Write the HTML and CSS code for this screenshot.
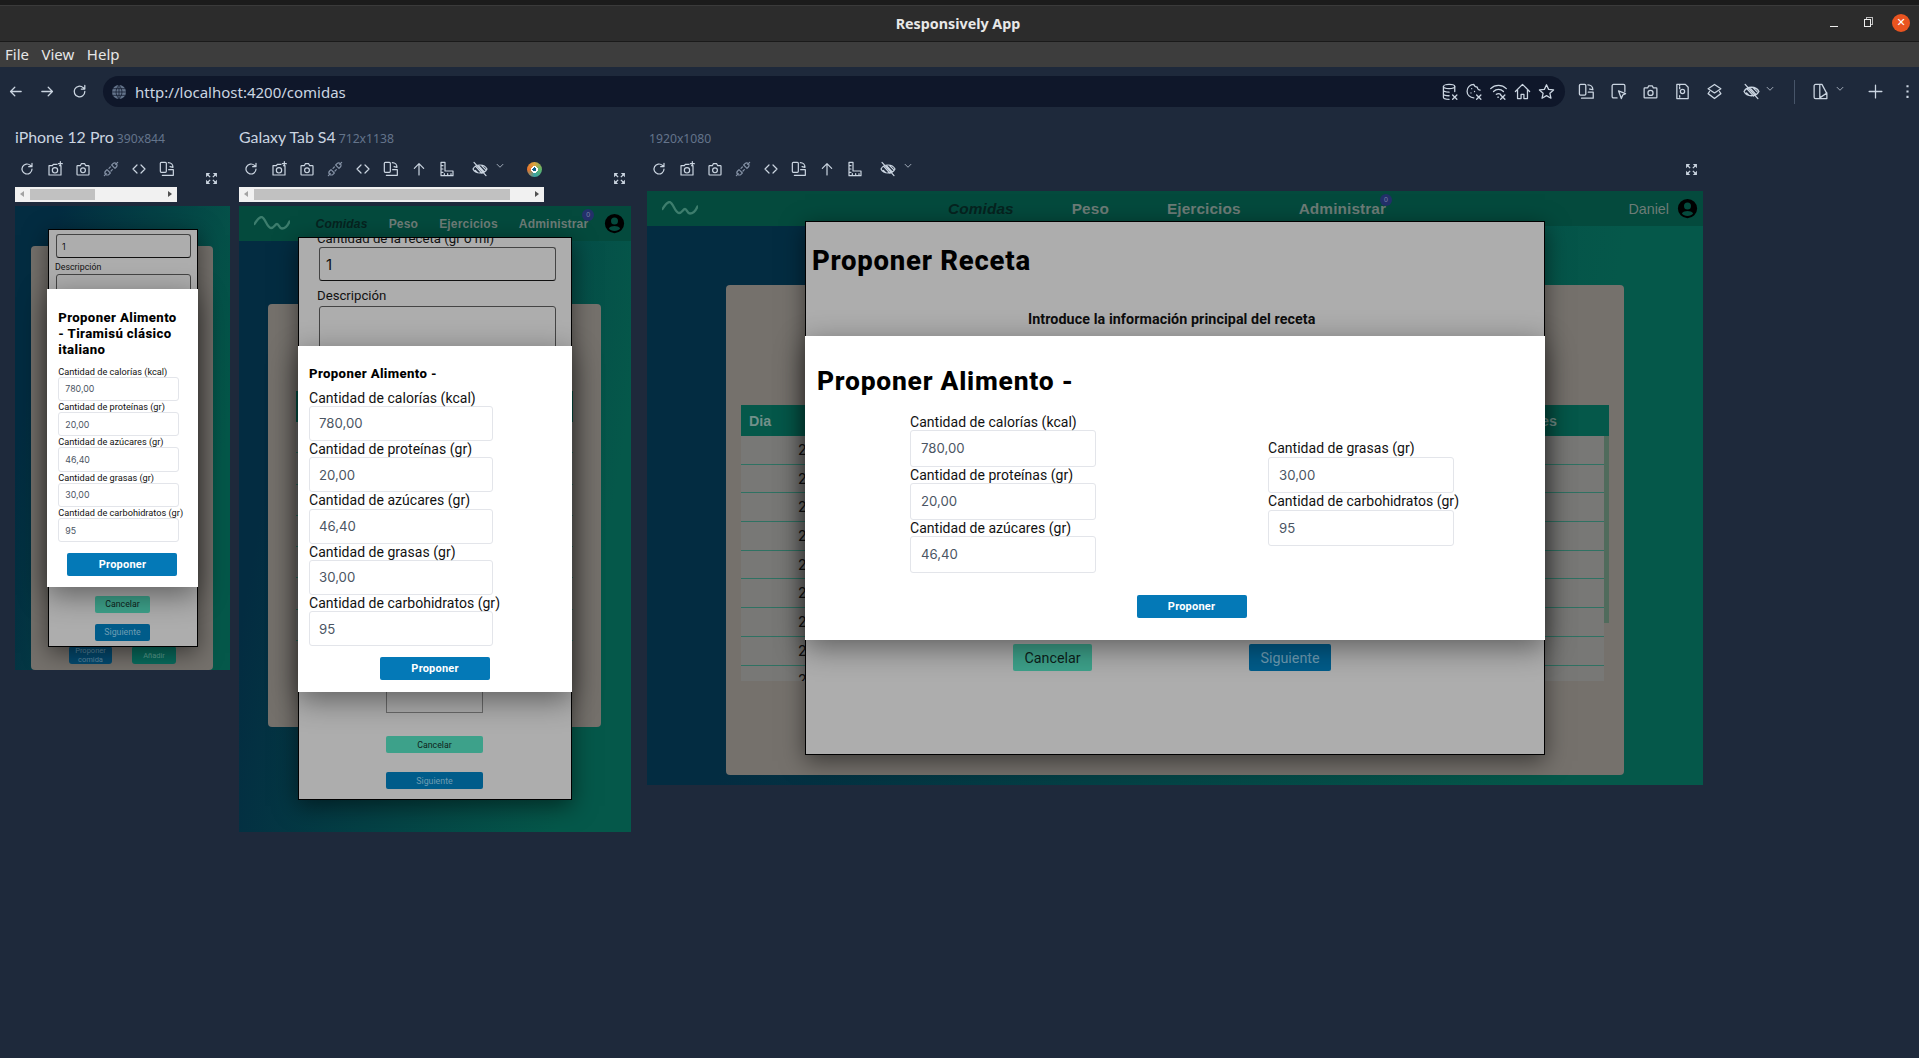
FILE: index.html
```html
<!DOCTYPE html>
<html lang="es">
<head>
<meta charset="utf-8">
<title>Responsively App</title>
<link rel="stylesheet" href="styles.css">
</head>
<body>
<svg class="sprite" xmlns="http://www.w3.org/2000/svg">
  <symbol id="i-back" viewBox="0 0 24 24"><path d="M20 12H5M11 6l-6 6 6 6"/></symbol>
  <symbol id="i-fwd" viewBox="0 0 24 24"><path d="M4 12h15M13 6l6 6-6 6"/></symbol>
  <symbol id="i-reload" viewBox="0 0 24 24"><path d="M19.5 12a7.5 7.5 0 1 1-2.4-5.5L19 8M19.5 3.5V8.5H14.5"/></symbol>
  <symbol id="i-globe" viewBox="0 0 24 24"><circle class="disc" cx="12" cy="12" r="10.5"/><path class="thin" d="M2 12h20M3.500 7h17M3.500 17h17M12 2v20M12 2c-6 5-6 15 0 20M12 2c6 5 6 15 0 20"/></symbol>
  <symbol id="i-shotplus" viewBox="0 0 24 24"><path d="M8 7l1.500-2H15M19 7h2v14H3V7h5"/><circle cx="12" cy="14" r="4"/><path d="M20 1v6M17 4h6"/></symbol>
  <symbol id="i-camera" viewBox="0 0 24 24"><path d="M4 7h4l1.500-3h5L16 7h4a1 1 0 0 1 1 1v12a1 1 0 0 1-1 1H4a1 1 0 0 1-1-1V8a1 1 0 0 1 1-1z"/><circle cx="12" cy="14" r="3.600"/></symbol>
  <symbol id="i-plug" viewBox="0 0 24 24"><path class="dim" d="M2 22l3-3M22 2l-3 3M6 13l5 5-2 2a3 3 0 0 1-5-5zM18 11l-5-5 2-2a3 3 0 0 1 5 5zM9 11l2-2M12 15l2-2"/></symbol>
  <symbol id="i-code" viewBox="0 0 24 24"><path d="M9 6l-6 6 6 6M15 6l6 6-6 6"/></symbol>
  <symbol id="i-rotate" viewBox="0 0 24 24"><rect x="2" y="2" width="9" height="15" rx="1.500"/><path d="M14 2.500c4 0 7 3 7 7M16.500 8.500l4.500 1M5 21.500h16.500V13h-7"/></symbol>
  <symbol id="i-up" viewBox="0 0 24 24"><path d="M12 21V4M5 11l7-7 7 7"/></symbol>
  <symbol id="i-ruler" viewBox="0 0 24 24"><path d="M3 2h6v13h12v7H3zM3 7h3M3 12h3M3 17h3M8 22v-3M13 22v-3M18 22v-3"/></symbol>
  <symbol id="i-eyeoff" viewBox="0 0 24 24"><path d="M1.500 12c4-8 17-8 21 0-4 8-17 8-21 0zM3 2l18 20M6 8.500l9 10M9.500 6.500l9 10M5 14l3.500 3.500M14 6.500l6 6"/></symbol>
  <symbol id="i-chev" viewBox="0 0 24 24"><path d="M5 8l7 7 7-7"/></symbol>
  <symbol id="i-expand" viewBox="0 0 24 24"><path class="solid" d="M2 2h7.500L2 9.500zM22 2v7.500L14.500 2zM2 22v-7.500L9.500 22zM22 22h-7.500L22 14.500z"/><path class="tail" d="M5 5l4.500 4.500M19 5l-4.500 4.500M5 19l4.500-4.500M19 19l-4.500-4.500"/></symbol>
  <symbol id="i-db" viewBox="0 0 24 24"><ellipse cx="10" cy="5" rx="8" ry="3"/><path d="M2 5v15c0 2 3 3 8 3M18 5v7M2 10c0 2 4 3 8 3M2 15c0 2 4 3 8 3M15 17l6 6M21 17l-6 6"/></symbol>
  <symbol id="i-cookie" viewBox="0 0 24 24"><path d="M11 2a9.500 9.500 0 1 0 0 19M11 2c1 3 3 4 5 4 0 2 2 4 4 4M8 8h.1M7 14h.1M12 12h.1M15 17l6 6M21 17l-6 6"/></symbol>
  <symbol id="i-wifi" viewBox="0 0 24 24"><path d="M1 8c6-6 16-6 22 0M5 12c4-4 10-4 14 0M9 16c2-1.500 4-1.500 6 0M11 20h1M15 17l6 6M21 17l-6 6"/></symbol>
  <symbol id="i-home" viewBox="0 0 24 24"><path d="M2 12L12 2l10 10M5 10v12h5v-6h4v6h5V10"/></symbol>
  <symbol id="i-star" viewBox="0 0 24 24"><path d="M12 2.500l3 6.500 7 .8-5.200 4.700 1.500 7L12 17.800 5.700 21.500l1.500-7L2 9.800 9 9z"/></symbol>
  <symbol id="i-picker" viewBox="0 0 24 24"><path d="M10 21H5a2 2 0 0 1-2-2V4a2 2 0 0 1 2-2h14a2 2 0 0 1 2 2v8M12 11l10 4-4 2-2 5z"/></symbol>
  <symbol id="i-doc" viewBox="0 0 24 24"><path d="M4 2h12l4 4v16H4zM8 2v2M8 6v2M8 18v2"/><circle cx="12" cy="12" r="3"/></symbol>
  <symbol id="i-layers" viewBox="0 0 24 24"><path d="M12 2l9 6-9 6-9-6zM5 12l-2 3 9 7 9-7-2-3"/></symbol>
  <symbol id="i-theme" viewBox="0 0 24 24"><path d="M11 2H5a2 2 0 0 0-2 2v16a2 2 0 0 0 2 2h16v-7L14 2zM11 2v20M11 21l10-7"/></symbol>
  <symbol id="i-plus" viewBox="0 0 24 24"><path d="M12 3v18M3 12h18"/></symbol>
  <symbol id="i-dots" viewBox="0 0 24 24"><path class="solid" d="M10.500 3h3v3h-3zM10.500 10.500h3v3h-3zM10.500 18h3v3h-3z"/></symbol>
  <symbol id="i-wave" viewBox="0 0 36 15"><path class="wave" d="M.5 8C3 4 5 1 7.500 1 11 1 13 12 17 12c3 0 4-4 6-4s2 4.500 5 4.500 6-3.500 7.500-7"/></symbol>
  <symbol id="i-user" viewBox="0 0 24 24"><path class="solid" fill-rule="evenodd" d="M12 1a11 11 0 1 0 0 22 11 11 0 0 0 0-22zm0 4a4 4 0 1 1 0 8 4 4 0 0 1 0-8zM12 20.500c-2.800 0-5.200-1.100-6.400-2.900 1-1.900 4-2.700 6.400-2.700s5.400.8 6.400 2.700c-1.200 1.800-3.600 2.900-6.400 2.900z"/></symbol>
</svg>

<div class="app">
  <header class="titlebar">
    <span class="app-name">Responsively App</span>
    <div class="win-controls">
      <span class="win-min"></span>
      <span class="win-max"></span>
      <span class="win-close">✕</span>
    </div>
  </header>
  <nav class="menubar"><span>File</span><span>View</span><span>Help</span></nav>

  <div class="addressrow">
    <span class="slot"><svg class="ic"><use href="#i-back"/></svg></span>
    <span class="slot"><svg class="ic"><use href="#i-fwd"/></svg></span>
    <span class="slot"><svg class="ic"><use href="#i-reload"/></svg></span>
    <div class="addressbar">
      <svg class="ic-g"><use href="#i-globe"/></svg>
      <span class="url">http://localhost:4200/comidas</span>
      <span class="bar-icons">
        <span class="slot-s"><svg class="ic"><use href="#i-db"/></svg></span>
        <span class="slot-s"><svg class="ic"><use href="#i-cookie"/></svg></span>
        <span class="slot-s"><svg class="ic"><use href="#i-wifi"/></svg></span>
        <span class="slot-s"><svg class="ic"><use href="#i-home"/></svg></span>
        <span class="slot-s"><svg class="ic"><use href="#i-star"/></svg></span>
      </span>
    </div>
    <span class="slot first-tool"><svg class="ic"><use href="#i-rotate"/></svg></span>
    <span class="slot"><svg class="ic"><use href="#i-picker"/></svg></span>
    <span class="slot"><svg class="ic"><use href="#i-camera"/></svg></span>
    <span class="slot"><svg class="ic"><use href="#i-doc"/></svg></span>
    <span class="slot"><svg class="ic"><use href="#i-layers"/></svg></span>
    <span class="slot eye-tool"><svg class="ic"><use href="#i-eyeoff"/></svg></span>
    <span class="chev-tool"><svg class="ic-xs"><use href="#i-chev"/></svg></span>
    <span class="divider"></span>
    <span class="slot theme-tool"><svg class="ic"><use href="#i-theme"/></svg></span>
    <span class="chev-tool chev-b"><svg class="ic-xs"><use href="#i-chev"/></svg></span>
    <span class="slot plus-tool"><svg class="ic"><use href="#i-plus"/></svg></span>
    <span class="dots-tool"><svg class="ic"><use href="#i-dots"/></svg></span>
  </div>

  <main class="devices">
    <!-- iPhone -->
    <section class="device d-phone">
      <div class="dev-label">iPhone 12 Pro<small>390x844</small></div>
      <div class="dev-tools">
        <span class="t"><svg class="ict"><use href="#i-reload"/></svg></span>
        <span class="t"><svg class="ict"><use href="#i-shotplus"/></svg></span>
        <span class="t"><svg class="ict"><use href="#i-camera"/></svg></span>
        <span class="t"><svg class="ict"><use href="#i-plug"/></svg></span>
        <span class="t"><svg class="ict"><use href="#i-code"/></svg></span>
        <span class="t"><svg class="ict"><use href="#i-rotate"/></svg></span>
        <span class="expand"><svg class="ic-exp"><use href="#i-expand"/></svg></span>
      </div>
      <div class="hscroll"><i class="arr-l"></i><b class="thumb"></b><i class="arr-r"></i></div>
      <div class="viewport">
        <div class="card">
          <div class="card-actions">
            <span class="btn-dim-blue">Proponer<br>comida</span>
            <span class="btn-dim-teal">Añadir</span>
          </div>
        </div>
        <div class="modal-back">
          <label class="back-label cut">Cantidad de la receta (gr o ml)</label>
          <div class="back-input">1</div>
          <label class="back-label">Descripción</label>
          <div class="back-area"></div>
          <div class="back-buttons">
            <span class="btn-cancel">Cancelar</span>
            <span class="btn-next">Siguiente</span>
          </div>
        </div>
        <div class="modal-front">
          <h2>Proponer Alimento - Tiramisú clásico italiano</h2>
          <div class="field"><label>Cantidad de calorías (kcal)</label><div class="num">780,00</div></div>
          <div class="field"><label>Cantidad de proteínas (gr)</label><div class="num">20,00</div></div>
          <div class="field"><label>Cantidad de azúcares (gr)</label><div class="num">46,40</div></div>
          <div class="field"><label>Cantidad de grasas (gr)</label><div class="num">30,00</div></div>
          <div class="field"><label>Cantidad de carbohidratos (gr)</label><div class="num">95</div></div>
          <div class="actions"><span class="btn-send">Proponer</span></div>
        </div>
      </div>
    </section>

    <!-- Tablet -->
    <section class="device d-tab">
      <div class="dev-label">Galaxy Tab S4<small>712x1138</small></div>
      <div class="dev-tools">
        <span class="t"><svg class="ict"><use href="#i-reload"/></svg></span>
        <span class="t"><svg class="ict"><use href="#i-shotplus"/></svg></span>
        <span class="t"><svg class="ict"><use href="#i-camera"/></svg></span>
        <span class="t"><svg class="ict"><use href="#i-plug"/></svg></span>
        <span class="t"><svg class="ict"><use href="#i-code"/></svg></span>
        <span class="t"><svg class="ict"><use href="#i-rotate"/></svg></span>
        <span class="t"><svg class="ict"><use href="#i-up"/></svg></span>
        <span class="t"><svg class="ict"><use href="#i-ruler"/></svg></span>
        <span class="t t-eye"><svg class="ict"><use href="#i-eyeoff"/></svg></span>
        <span class="t-chev"><svg class="ic-xs"><use href="#i-chev"/></svg></span>
        <span class="t-color"></span>
        <span class="expand"><svg class="ic-exp"><use href="#i-expand"/></svg></span>
      </div>
      <div class="hscroll"><i class="arr-l"></i><b class="thumb"></b><i class="arr-r"></i></div>
      <div class="viewport">
        <div class="site-head">
          <svg class="logo"><use href="#i-wave"/></svg>
          <div class="site-nav">
            <a class="active">Comidas</a><a>Peso</a><a>Ejercicios</a><a class="admin">Administrar<em>0</em></a>
          </div>
          <svg class="avatar"><use href="#i-user"/></svg>
        </div>
        <div class="card">
          <div class="tbl">
            <div class="tbl-head"></div>
            <div class="tbl-row"></div><div class="tbl-row"></div><div class="tbl-row"></div><div class="tbl-row"></div>
            <div class="tbl-row"></div><div class="tbl-row"></div><div class="tbl-row"></div>
          </div>
        </div>
        <div class="modal-back">
          <label class="back-label cut">Cantidad de la receta (gr o ml)</label>
          <div class="back-input">1</div>
          <label class="back-label">Descripción</label>
          <div class="back-area"></div>
          <div class="back-img"></div>
          <div class="back-buttons">
            <span class="btn-cancel">Cancelar</span>
            <span class="btn-next">Siguiente</span>
          </div>
        </div>
        <div class="modal-front">
          <h2>Proponer Alimento -</h2>
          <div class="field"><label>Cantidad de calorías (kcal)</label><div class="num">780,00</div></div>
          <div class="field"><label>Cantidad de proteínas (gr)</label><div class="num">20,00</div></div>
          <div class="field"><label>Cantidad de azúcares (gr)</label><div class="num">46,40</div></div>
          <div class="field"><label>Cantidad de grasas (gr)</label><div class="num">30,00</div></div>
          <div class="field"><label>Cantidad de carbohidratos (gr)</label><div class="num">95</div></div>
          <div class="actions"><span class="btn-send">Proponer</span></div>
        </div>
      </div>
    </section>

    <!-- Desktop -->
    <section class="device d-hd">
      <div class="dev-label"><small>1920x1080</small></div>
      <div class="dev-tools">
        <span class="t"><svg class="ict"><use href="#i-reload"/></svg></span>
        <span class="t"><svg class="ict"><use href="#i-shotplus"/></svg></span>
        <span class="t"><svg class="ict"><use href="#i-camera"/></svg></span>
        <span class="t"><svg class="ict"><use href="#i-plug"/></svg></span>
        <span class="t"><svg class="ict"><use href="#i-code"/></svg></span>
        <span class="t"><svg class="ict"><use href="#i-rotate"/></svg></span>
        <span class="t"><svg class="ict"><use href="#i-up"/></svg></span>
        <span class="t"><svg class="ict"><use href="#i-ruler"/></svg></span>
        <span class="t t-eye"><svg class="ict"><use href="#i-eyeoff"/></svg></span>
        <span class="t-chev"><svg class="ic-xs"><use href="#i-chev"/></svg></span>
        <span class="expand"><svg class="ic-exp"><use href="#i-expand"/></svg></span>
      </div>
      <div class="viewport">
        <div class="site-head">
          <svg class="logo"><use href="#i-wave"/></svg>
          <div class="site-nav">
            <a class="active">Comidas</a><a>Peso</a><a>Ejercicios</a><a class="admin">Administrar<em>0</em></a>
          </div>
          <span class="username">Daniel</span>
          <svg class="avatar"><use href="#i-user"/></svg>
        </div>
        <div class="card">
          <div class="tbl">
            <div class="tbl-head"><span>Dia</span><span>Acciones</span></div>
            <div class="tbl-row"><span>2</span></div><div class="tbl-row"><span>2</span></div>
            <div class="tbl-row"><span>2</span></div><div class="tbl-row"><span>2</span></div>
            <div class="tbl-row"><span>2</span></div><div class="tbl-row"><span>2</span></div>
            <div class="tbl-row"><span>2</span></div><div class="tbl-row"><span>2</span></div>
            <div class="tbl-row tbl-row-cut"><span>2</span></div>
            <i class="tbl-scroll"></i>
          </div>
        </div>
        <div class="modal-back">
          <h1>Proponer Receta</h1>
          <p class="intro">Introduce la información principal del receta</p>
          <div class="back-buttons">
            <span class="btn-cancel">Cancelar</span>
            <span class="btn-next">Siguiente</span>
          </div>
        </div>
        <div class="modal-front">
          <h2>Proponer Alimento -</h2>
          <div class="cols">
            <div class="col">
              <div class="field"><label>Cantidad de calorías (kcal)</label><div class="num">780,00</div></div>
              <div class="field"><label>Cantidad de proteínas (gr)</label><div class="num">20,00</div></div>
              <div class="field"><label>Cantidad de azúcares (gr)</label><div class="num">46,40</div></div>
            </div>
            <div class="col">
              <div class="field"><label>Cantidad de grasas (gr)</label><div class="num">30,00</div></div>
              <div class="field"><label>Cantidad de carbohidratos (gr)</label><div class="num">95</div></div>
            </div>
          </div>
          <div class="actions"><span class="btn-send">Proponer</span></div>
        </div>
      </div>
    </section>
  </main>
</div>
</body>
</html>
```
FILE: styles.css
```css
* { box-sizing: border-box; }
html, body { margin: 0; padding: 0; height: 100%; }
body { background: #1e293b; font-family: "Noto Sans", sans-serif; color: #cbd5e1; overflow: hidden; }
.sprite { display: none; }
symbol path, symbol rect, symbol circle, symbol ellipse { fill: none; stroke: currentColor; stroke-width: 1.8; stroke-linecap: round; stroke-linejoin: round; }
symbol .solid { fill: currentColor; stroke: none; }
symbol .tail { stroke-width: 2.4; stroke-linecap: butt; }
symbol .dim { stroke: #8592a6; }
symbol .disc { fill: #64748b; stroke: none; }
symbol .thin { stroke: #0f172a; stroke-width: 1.1; }
symbol .wave { stroke-width: 2.3; }
svg { display: block; color: #cbd5e1; overflow: visible; }
.app { width: 1919px; height: 1058px; display: flex; flex-direction: column; }

/* window chrome */
.titlebar { height: 42px; background: linear-gradient(#1b1b1b 0 5px, #3a3a3a 5px 6px, #2c2c2c 6px 41px, #1a1a1a 41px); display: flex; align-items: center; justify-content: center; position: relative; padding-top: 5px; }
.app-name { font-family: "Noto Sans", sans-serif; font-weight: 700; font-size: 14.300px; color: #e8e8e8; margin-left: -3px; }
.win-controls { position: absolute; right: 9px; top: 14px; display: flex; align-items: center; }
.win-min { width: 8px; height: 1.500px; background: #eee; margin-top: 7px; margin-right: 26px; }
.win-max { width: 7px; height: 8px; border: 1px solid #eee; box-shadow: 2px -2px 0 -1px #2c2c2c, 2px -2px 0 0 #bbb; margin-right: 21px; }
.win-close { width: 18px; height: 18px; border-radius: 50%; background: #e95420; color: #fff; font-size: 11px; line-height: 18px; text-align: center; font-family: "DejaVu Sans", sans-serif; }
.menubar { height: 25px; padding-bottom: 1px; background: #3d3d3d; display: flex; align-items: center; padding-left: 5px; gap: 12.500px; font-size: 15px; color: #e6e6e6; }

/* address row */
.addressrow { height: 51px; padding-bottom: 2px; display: flex; align-items: center; margin-left: -1px; }
.slot { width: 32px; height: 24px; display: flex; align-items: center; justify-content: center; flex: none; }
.ic { width: 17px; height: 17px; }
.ic-g { width: 16px; height: 16px; margin-right: 8px; flex: none; }
.ic-xs { width: 10px; height: 10px; }
.addressbar { margin-left: 8px; width: 1462px; height: 31px; border-radius: 16px; background: #0f172a; display: flex; align-items: center; padding: 0 7px 0 8px; flex: none; }
.url { font-family: "Noto Sans", sans-serif; font-size: 15px; color: #cbd5e1; }
.bar-icons { margin-left: auto; display: flex; }
.slot-s { width: 24px; display: flex; justify-content: center; }
.first-tool { margin-left: 5px; }
.eye-tool { margin-left: 5px; }
.chev-tool { width: 12px; margin-left: -3px; margin-top: -6px; display: flex; justify-content: center; flex: none; }
.divider { width: 1px; height: 24px; background: #475569; margin-left: 18px; flex: none; }
.theme-tool { margin-left: 9px; }
.chev-b { margin-left: -2px; }
.plus-tool { margin-left: 13px; }
.dots-tool { width: 16px; margin-left: 8px; flex: none; }

/* devices */
.devices { display: flex; align-items: flex-start; padding: 9px 0 0 15px; }
.device { flex: none; display: flex; flex-direction: column; }
.d-phone { width: 215px; }
.d-tab { width: 392px; margin-left: 9px; }
.d-hd { width: 1056px; margin-left: 16px; }
.dev-label { height: 20px; line-height: 20px; font-family: Lato, sans-serif; font-size: 15.900px; color: #cbd5e1; white-space: nowrap; }
.dev-label small { font-family: "Noto Sans", sans-serif; font-size: 12.200px; color: #64748b; margin-left: 3px; }
.d-hd .dev-label small { margin-left: 2px; }
.dev-tools { height: 24px; margin: 10px 0 0 -2px; display: flex; align-items: center; color: #cbd5e1; }
.t { width: 28px; display: flex; justify-content: center; flex: none; }
.ict { width: 16px; height: 16px; }
.t-eye { margin-left: 5px; }
.t-chev { width: 12px; margin-top: -6px; flex: none; display: flex; justify-content: center; }
.t-color { width: 15px; height: 15px; border-radius: 50%; margin-left: 21px; background: radial-gradient(circle, #0e5f8a 0 2px, #fff 2px 3.500px, transparent 3.500px), conic-gradient(#d9a441, #5fb36a, #38a3a5, #e8742c, #d9a441); }
.expand { margin-left: auto; width: 14px; flex: none; }
.ic-exp { width: 13px; height: 13px; margin-left: auto; }
.d-phone .expand { margin-right: 12px; margin-top: 18px; }
.d-tab .expand { margin-right: 5px; margin-top: 18px; }
.d-hd .expand { margin-right: 5px; }
.hscroll { height: 15px; margin-top: 6px; background: #f1f1f1; position: relative; display: flex; align-items: center; }
.d-phone .hscroll { width: 162px; }
.d-tab .hscroll { width: 305px; }
.thumb { display: block; height: 11px; background: #c1c1c1; margin-left: 15px; }
.d-phone .thumb { width: 65px; }
.d-tab .thumb { width: 256px; }
.arr-l, .arr-r { position: absolute; top: 4px; width: 0; height: 0; border-top: 3.500px solid transparent; border-bottom: 3.500px solid transparent; }
.arr-l { left: 5px; border-right: 4px solid #a3a3a3; }
.arr-r { right: 5px; border-left: 4px solid #505050; }

/* emulated page */
.viewport { position: relative; overflow: hidden; margin-top: 4px; background: linear-gradient(100deg, #032c41 15%, #05584a 85%); font-family: Roboto, sans-serif; color: #111; }
.d-phone .viewport { width: 215px; height: 464px; }
.d-tab .viewport { width: 392px; height: 626px; }
.d-hd .viewport { width: 1056px; height: 594px; margin-top: 10px; }
.site-head { height: 35px; background: #044a3d; display: flex; align-items: center; font-family: "Liberation Sans", sans-serif; font-weight: 700; color: #6d7c77; }
.logo { width: 36px; height: 15px; margin-left: 15px; flex: none; color: #3d7d6d; }
.site-nav { display: flex; }
.site-nav a { white-space: nowrap; }
.site-nav .active { color: #06231f; font-style: italic; }
.admin { position: relative; }
.admin em { position: absolute; width: 12px; height: 12px; border-radius: 50%; background: #23306a; color: #7a83a8; font: 400 7px/12px "Liberation Sans", sans-serif; text-align: center; }
.avatar { width: 21px; height: 21px; color: #000; flex: none; }
.username { margin-left: auto; margin-right: 8px; font-weight: 400; color: #6d7c77; }
.card { background: #75716c; border-radius: 4px; }

/* table */
.tbl { position: relative; }
.tbl-head { background: #05584a; display: flex; justify-content: space-between; align-items: center; font-family: "Liberation Sans", sans-serif; font-weight: 700; color: #73908a; }
.tbl-row { border-bottom: 1px solid #2f7263; background: #787876; }

/* back modal */
.modal-back { position: absolute; background: #adadad; border: 1px solid #000; box-shadow: 0 6px 22px rgba(0,0,0,.5); overflow: hidden; display: flex; flex-direction: column; }
.modal-back h1 { margin: 0; font-size: 27.500px; line-height: 32px; font-weight: 800; letter-spacing: .75px; color: #000; }
.intro { margin: 0; text-align: center; font-weight: 700; color: #0d0d0d; }
.back-label { display: block; color: #111; white-space: nowrap; }
.back-input { border: 1px solid #444; border-bottom-color: #111; border-radius: 3px; font-family: Inter, sans-serif; display: flex; align-items: center; color: #111; flex: none; }
.back-area { border: 1px solid #444; border-radius: 3px; flex: none; }
.back-buttons { display: flex; align-items: center; flex: none; }
.btn-cancel, .btn-next { display: flex; align-items: center; justify-content: center; border-radius: 2px; white-space: nowrap; }
.btn-cancel { background: #3da18a; color: #0d1f1b; }
.btn-next { background: #005c8a; color: #6f9cb3; }
.back-img { border: 1px solid #6a6a6a; border-top: none; flex: none; }

/* front modal */
.modal-front { position: absolute; background: #fff; box-shadow: 0 8px 28px rgba(0,0,0,.45); overflow: hidden; }
.modal-front h2 { margin: 0; font-weight: 800; color: #000; }
.field label { display: block; white-space: nowrap; color: #111; }
.num { background: #fff; border: 1px solid #e3e5ea; border-radius: 3px; display: flex; align-items: center; font-family: Inter, sans-serif; color: #4b5563; }
.actions { display: flex; justify-content: center; }
.btn-send { display: flex; align-items: center; justify-content: center; width: 110px; height: 23px; border-radius: 2px; background: #0479b7; color: #fff; font-weight: 700; font-size: 11px; letter-spacing: .2px; }

/* ---- desktop ---- */
.d-hd .site-nav { margin-left: 250px; gap: 58px; font-size: 15.400px; letter-spacing: .1px; }
.d-hd .admin em { right: -6px; top: -6px; }
.d-hd .username { font-size: 14.300px; }
.d-hd .avatar { margin-right: 5px; }
.d-hd .card { margin: 59px 0 0 79px; width: 898px; height: 490px; padding: 120px 15px 0 15px; }
.d-hd .tbl-head { height: 31px; padding: 0 52px 0 8px; font-size: 14.300px; }
.d-hd .tbl-row { height: 28.700px; width: 863px; font-family: Inter, sans-serif; font-size: 14px; line-height: 28px; padding-left: 57px; }
.d-hd .tbl-row-cut { height: 15px; overflow: hidden; border-bottom: none; }
.tbl-scroll { position: absolute; top: 31px; right: 0; width: 5px; height: 187px; background: #506b5c; }
.d-hd .modal-back { left: 158px; top: 30px; width: 739.500px; height: 534px; padding: 23px 6px 0; }
.d-hd .intro { margin: 32px 6px 0 0; font-size: 14.300px; line-height: 20px; letter-spacing: .08px; }
.d-hd .back-buttons { margin-top: 315px; padding-left: 201px; gap: 157px; }
.d-hd .btn-cancel { width: 79px; height: 27px; font-size: 14.300px; }
.d-hd .btn-next { width: 82px; height: 27px; font-size: 14.300px; }
.d-hd .modal-front { left: 158px; top: 145px; width: 740px; height: 304px; padding: 29px 12px 0; }
.d-hd .modal-front h2 { font-size: 26.400px; line-height: 32px; letter-spacing: .77px; }
.cols { display: grid; grid-template-columns: 358px 186px; margin: 16.600px 0 0 93px; align-items: center; }
.d-hd .field label { height: 16.600px; font-size: 14px; line-height: 17px; letter-spacing: .03px; }
.d-hd .num { width: 186px; height: 36.400px; padding-left: 10px; font-size: 13.200px; }
.d-hd .actions { margin: 22px 0 0 33px; }

/* ---- tablet ---- */
.d-tab .site-nav { margin-left: 25.500px; gap: 21px; font-size: 12.100px; letter-spacing: .15px; }
.d-tab .admin em { right: -6px; top: -8px; }
.d-tab .avatar { margin-left: auto; margin-right: 6px; }
.d-tab .card { margin: 63px 0 0 29px; width: 333px; height: 423px; padding: 87px 28px 0; }
.d-tab .tbl-head { height: 31px; }
.d-tab .tbl-row { height: 31.300px; }
.d-tab .modal-back { left: 59px; top: 31px; width: 274px; height: 563px; padding: 0 18px; }
.d-tab .back-label { font-size: 13.200px; line-height: 17px; height: 17px; }
.d-tab .back-label.cut { margin-top: -8px; }
.d-tab .back-input { height: 34px; margin-left: 2px; padding-left: 6px; font-size: 15px; width: 237px; }
.d-tab .back-label:not(.cut) { margin-top: 6px; }
.d-tab .back-area { height: 60px; margin: 2px 0 0 2px; width: 237px; }
.d-tab .back-img { width: 97px; height: 40px; margin: 307px 0 0 69px; }
.d-tab .back-buttons { flex-direction: column; margin: 23px 0 0 69px; gap: 19px; align-self: flex-start; }
.d-tab .btn-cancel, .d-tab .btn-next { width: 97px; height: 17px; font-size: 8.800px; }
.d-tab .modal-front { left: 59px; top: 140px; width: 274px; height: 346px; padding: 20px 11px 0; }
.d-tab .modal-front h2 { font-size: 13.200px; line-height: 16px; margin-bottom: 7.700px; letter-spacing: .37px; }
.d-tab .field label { height: 16.300px; font-size: 14px; line-height: 16px; letter-spacing: .03px; }
.d-tab .num { width: 184px; height: 35px; padding-left: 9px; font-size: 13.200px; }
.d-tab .actions { margin-top: 11.300px; }

/* ---- phone ---- */
.d-phone .card { margin: 40px 0 0 16px; width: 182px; height: 424px; padding: 0 0 6px; display: flex; flex-direction: column; justify-content: flex-end; }
.card-actions { display: flex; gap: 20px; padding-left: 38px; }
.btn-dim-blue, .btn-dim-teal { height: 18px; border-radius: 3px; display: flex; align-items: center; justify-content: center; text-align: center; font-size: 7.500px; line-height: 9px; }
.btn-dim-blue { width: 43px; background: #034a70; color: #5f8aa3; }
.btn-dim-teal { width: 44px; background: #086c5e; color: #5ea394; }
.d-phone .modal-back { left: 33px; top: 23px; width: 150px; height: 418px; padding: 0 6px 0 7px; }
.d-phone .back-label { font-size: 8.800px; line-height: 11px; height: 11px; }
.d-phone .back-label.cut { margin: -8px 0 0 82px; height: 12px; }
.d-phone .back-input { height: 24px; padding-left: 5px; font-size: 8.800px; width: 135px; }
.d-phone .back-label:not(.cut) { margin: 4px 0 0 -1px; }
.d-phone .back-area { height: 30px; margin-top: 1px; width: 135px; }
.d-phone .back-buttons { flex-direction: column; margin: 291.500px 0 0 39px; gap: 11px; align-self: flex-start; }
.d-phone .btn-cancel, .d-phone .btn-next { width: 55px; height: 17px; font-size: 8.800px; }
.d-phone .modal-front { left: 32.300px; top: 83.300px; width: 150.400px; height: 297.400px; padding: 21px 11px 0; }
.d-phone .modal-front h2 { font-size: 13.200px; line-height: 16px; margin-bottom: 7.400px; letter-spacing: .37px; max-width: 124px; }
.d-phone .field label { height: 11px; font-size: 9.200px; line-height: 11px; }
.d-phone .num { width: 120.400px; height: 24.300px; padding-left: 6px; font-size: 8.800px; }
.d-phone .actions { margin-top: 10.600px; }
```
